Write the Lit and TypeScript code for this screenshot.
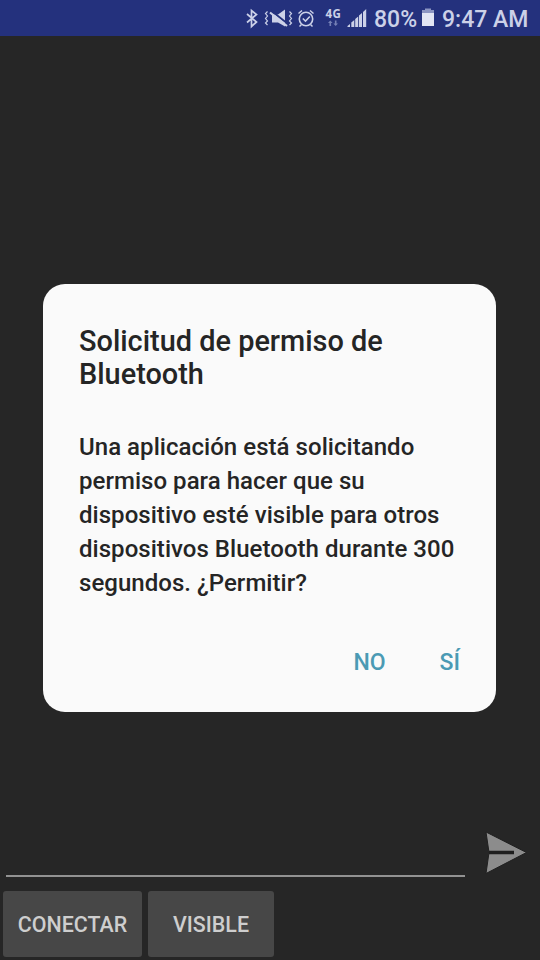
import { LitElement, html, css } from "lit";
import { customElement } from "lit/decorators.js";

@customElement("status-bar")
class StatusBar extends LitElement {
  static styles = css`
    :host {
      display: flex;
      align-items: center;
      justify-content: flex-end;
      box-sizing: border-box;
      height: 36px;
      padding-right: 12px;
      background: #24317d;
      color: #ccd1e8;
      font: 500 23px/36px Roboto, sans-serif;
      white-space: nowrap;
    }
    svg { display: block; flex: none; }
    .icons { width: 128px; height: 36px; }
    .network { font: 700 11.5px "Noto Sans", sans-serif; letter-spacing: 0.3px; }
    .level { width: 43px; margin-left: 5px; padding-top: 3px; }
    .battery { width: 12px; height: 36px; margin-left: 5px; }
    .time { width: 86px; margin-left: 8px; padding-top: 3px; }
  `;
  render() {
    return html`
      <svg class="icons" viewBox="241 0 128 36" fill="none" stroke="#ccd1e8">
        <path d="M247 14l9.500 8-5 4.500V10.500l5 4L247 22.500" stroke-width="1.700" />
        <path d="M267.500 11.500l-2 2 2 2.500-2 2.500 2 2.500-2 2 2 2M289.500 11.500l2 2-2 2.500 2 2.500-2 2.500 2 2-2 2" stroke-width="1.200" />
        <path d="M272 14.500h6l7-5v17l-7-4h-6z" fill="#ccd1e8" stroke="none" />
        <path d="M271 10.500l17 13.500" stroke="#24317d" stroke-width="1.800" />
        <path d="M270 12.500l17 13.500" stroke-width="2.200" />
        <circle cx="306" cy="19" r="6.700" stroke-width="1.600" />
        <path d="M302.800 18.500l2.700 2.600 4.300-4.600M298.500 13.500l3.500-3M313.500 13.500l-3.500-3M301.500 24.500l-2 2M310.500 24.500l2 2" stroke-width="1.500" />
        <text class="network" x="325.500" y="17.500" fill="#ccd1e8" stroke="none">4G</text>
        <g fill="#7580b6" stroke="none">
          <path d="M330.300 20.500l2.300 2.500h-1.500v3h-1.600v-3h-1.500zM335.700 26l2.300-2.500h-1.500v-3h-1.600v3h-1.500z" />
        </g>
        <path d="M347.500 27v-1l2.500-2v3zM351.300 27v-4.500l3-2.500v7zM355.200 27v-8l3-2.500v10.500zM359 27v-11.500l3-2.500v14zM363 27V12l3.200-3v18z" fill="#ccd1e8" stroke="none" />
      </svg>
      <span class="level">80%</span>
      <svg class="battery" viewBox="422 0 12 36">
        <path d="M422 13v-3h3v-1.500h6V10h3v3z" fill="#8c95c2" />
        <path d="M422 13h12v13h-12z" fill="#e2e5f3" />
      </svg>
      <span class="time">9:47 AM</span>
    `;
  }
}

@customElement("permission-dialog")
class PermissionDialog extends LitElement {
  static styles = css`
    :host {
      display: flex;
      flex-direction: column;
      box-sizing: border-box;
      width: 453px;
      height: 428px;
      padding: 41px 36px 31px 36px;
      border-radius: 22px;
      background: #fafafa;
      color: #252525;
      font-family: Roboto, sans-serif;
      white-space: nowrap;
    }
    h1 { margin: 0; font-size: 28.9px; font-weight: 500; line-height: 33px; }
    p { margin: 39px 0 0; font-size: 24px; font-weight: 500; line-height: 34px; letter-spacing: 0.04px; }
    .actions { display: flex; justify-content: flex-end; gap: 54px; margin-top: auto; }
    button {
      padding: 0;
      border: 0;
      background: none;
      color: #4b9ab4;
      font: 500 23px/36px Roboto, sans-serif;
    }
  `;
  render() {
    return html`
      <h1>Solicitud de permiso de<br />Bluetooth</h1>
      <p>Una aplicación está solicitando<br />permiso para hacer que su<br />dispositivo esté visible para otros<br />dispositivos Bluetooth durante 300<br />segundos. ¿Permitir?</p>
      <div class="actions"><button>NO</button><button>SÍ</button></div>
    `;
  }
}

@customElement("app-root")
class AppRoot extends LitElement {
  static styles = css`
    :host {
      display: flex;
      flex-direction: column;
      width: 540px;
      height: 960px;
      overflow: hidden;
      background: #262626;
    }
    main { flex: 1; display: flex; justify-content: center; align-items: flex-start; padding: 248px 1px 0 0; }
    .composer { display: flex; align-items: flex-end; height: 49px; padding: 0 12px 0 6px; }
    .field { width: 459px; height: 2px; background: #929292; }
    .send { width: 44px; height: 46px; margin-left: auto; margin-bottom: 1px; }
    .buttons { display: flex; gap: 6px; padding: 14px 3px 3px; }
    .buttons button {
      height: 66px;
      padding: 1px 0 0;
      border: 0;
      border-radius: 3px;
      background: #474747;
      color: #cecece;
      font: 500 21.4px Roboto, sans-serif;
    }
    .connect { width: 139px; }
    .visible { width: 126px; }
  `;
  render() {
    return html`
      <status-bar></status-bar>
      <main><permission-dialog></permission-dialog></main>
      <div class="composer">
        <div class="field"></div>
        <svg class="send" viewBox="484 830 44 46">
          <path d="M486 832L526.500 852.500L486 873.500L489 852.500z" fill="#8c8c8c" stroke="#202020" stroke-width="1" />
          <path d="M489 852.500h25" stroke="#1e1e1e" stroke-width="3.500" />
        </svg>
      </div>
      <div class="buttons">
        <button class="connect">CONECTAR</button>
        <button class="visible">VISIBLE</button>
      </div>
    `;
  }
}
